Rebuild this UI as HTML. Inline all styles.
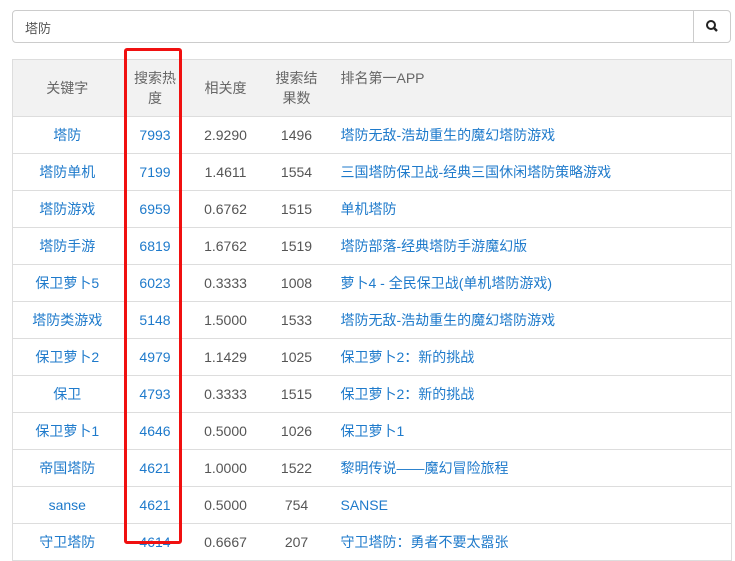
<!DOCTYPE html>
<html><head><meta charset="utf-8"><style>
body{margin:0;background:#fff;font-family:"Liberation Sans","Noto Sans CJK SC",sans-serif;font-size:14px;color:#555;width:735px;height:545px;overflow:hidden;position:relative}
.search{position:absolute;left:12px;top:10px;width:717px;height:31px;border:1px solid #ccc;border-radius:4px}
.search span{position:absolute;left:12px;top:7px;font-size:13px;color:#555}
.btn{position:absolute;right:0;top:0;width:36px;height:31px;border-left:1px solid #ccc}
table{position:absolute;left:12px;top:59px;border-collapse:collapse;width:720px;border-left:1px solid #ddd;border-right:1px solid #ddd}
th,td{border-top:1px solid #ddd;border-bottom:1px solid #ddd;text-align:center;padding:0;font-weight:normal;box-sizing:border-box}
th{background:#f2f2f2;color:#666;height:57px;line-height:20px}
th div{height:56px;overflow:hidden;display:flex;align-items:center;justify-content:center}
td{height:37px;line-height:18px}
td a{color:#1e7acb}
td:nth-child(5){text-align:left;padding-left:10px}
th:nth-child(5) div{justify-content:flex-start;align-items:flex-start;padding-left:10px;padding-top:8px;box-sizing:border-box}
.red{position:absolute;left:124px;top:48px;width:52px;height:490px;border:3px solid #f01010;border-radius:3px}
</style></head><body>
<div class="search"><span>塔防</span><div class="btn"><svg width="36" height="31" viewBox="0 0 36 31"><circle cx="17" cy="14" r="4" fill="none" stroke="#222" stroke-width="2"/><line x1="20" y1="17" x2="23" y2="20" stroke="#222" stroke-width="2.4"/></svg></div></div>
<table>
<colgroup><col style="width:109px"><col style="width:67px"><col style="width:74px"><col style="width:68px"><col></colgroup>
<tr><th><div>关键字</div></th><th><div>搜索热<br>度</div></th><th><div>相关度</div></th><th><div>搜索结<br>果数</div></th><th><div>排名第一APP</div></th></tr>
<tr><td><a>塔防</a></td><td><a>7993</a></td><td>2.9290</td><td>1496</td><td><a>塔防无敌-浩劫重生的魔幻塔防游戏</a></td></tr>
<tr><td><a>塔防单机</a></td><td><a>7199</a></td><td>1.4611</td><td>1554</td><td><a>三国塔防保卫战-经典三国休闲塔防策略游戏</a></td></tr>
<tr><td><a>塔防游戏</a></td><td><a>6959</a></td><td>0.6762</td><td>1515</td><td><a>单机塔防</a></td></tr>
<tr><td><a>塔防手游</a></td><td><a>6819</a></td><td>1.6762</td><td>1519</td><td><a>塔防部落-经典塔防手游魔幻版</a></td></tr>
<tr><td><a>保卫萝卜5</a></td><td><a>6023</a></td><td>0.3333</td><td>1008</td><td><a>萝卜4 - 全民保卫战(单机塔防游戏)</a></td></tr>
<tr><td><a>塔防类游戏</a></td><td><a>5148</a></td><td>1.5000</td><td>1533</td><td><a>塔防无敌-浩劫重生的魔幻塔防游戏</a></td></tr>
<tr><td><a>保卫萝卜2</a></td><td><a>4979</a></td><td>1.1429</td><td>1025</td><td><a>保卫萝卜2：新的挑战</a></td></tr>
<tr><td><a>保卫</a></td><td><a>4793</a></td><td>0.3333</td><td>1515</td><td><a>保卫萝卜2：新的挑战</a></td></tr>
<tr><td><a>保卫萝卜1</a></td><td><a>4646</a></td><td>0.5000</td><td>1026</td><td><a>保卫萝卜1</a></td></tr>
<tr><td><a>帝国塔防</a></td><td><a>4621</a></td><td>1.0000</td><td>1522</td><td><a>黎明传说——魔幻冒险旅程</a></td></tr>
<tr><td><a>sanse</a></td><td><a>4621</a></td><td>0.5000</td><td>754</td><td><a>SANSE</a></td></tr>
<tr><td><a>守卫塔防</a></td><td><a>4614</a></td><td>0.6667</td><td>207</td><td><a>守卫塔防：勇者不要太嚣张</a></td></tr>
</table>
<div class="red"></div>
</body></html>
